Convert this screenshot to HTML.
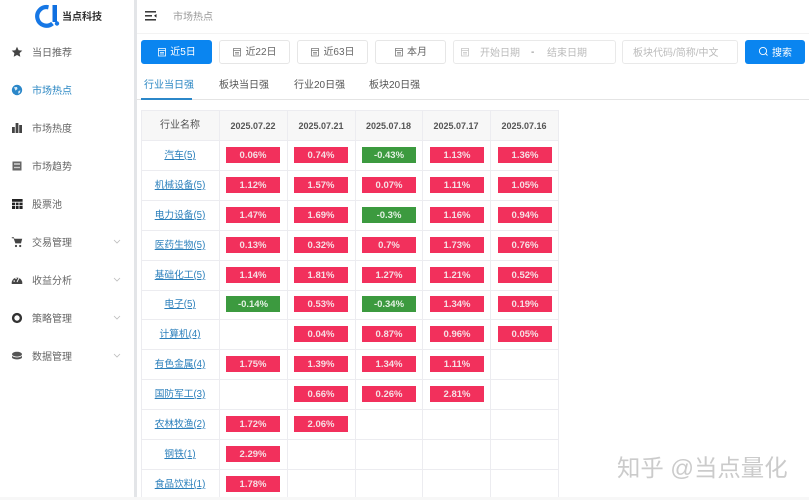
<!DOCTYPE html>
<html lang="zh"><head><meta charset="utf-8"><style>
*{box-sizing:border-box}
html,body{margin:0;padding:0;background:#fff}
body{width:809px;height:500px;overflow:hidden;position:relative;font-family:"Liberation Sans","Noto Sans CJK SC",sans-serif;font-size:10px;color:#555}
#w{position:absolute;left:0;top:0;width:809px;height:500px;filter:blur(.3px)}
.a{position:absolute}
.nav{position:absolute;left:32px;font-size:10px;line-height:14px;color:#666;white-space:nowrap}
.ic{position:absolute;left:11px;width:12px;height:12px}
.chev{position:absolute;left:113px;width:8px;height:5px}
.btn{position:absolute;top:40px;height:24px;width:71px;border:1px solid #e6e6e6;border-radius:3px;text-align:center;line-height:24px;color:#666;font-size:10px;background:#fff;white-space:nowrap}
.btn svg{vertical-align:-1.5px;margin-right:3px}
.tab{position:absolute;top:79px;font-size:10px;line-height:14px;color:#555;white-space:nowrap}
.h,.n{position:absolute;text-align:center;white-space:nowrap}
.h{top:110px;height:30px;line-height:32px;background:#f7f7f7;font-size:9px;color:#555;font-weight:700}
.h.z{font-size:10px;font-weight:400}
.n{left:141px;width:78px;font-size:9.7px;line-height:14px;color:#2b7fbb;text-decoration:underline}
.l{position:absolute;background:#ececf0}
.b{position:absolute;width:54px;height:16px;line-height:17px;text-align:center;color:#f6dfe4;background:#f2305c;font-size:9.5px;font-weight:700}
.g{background:#3c9a3f;color:#e4f2e4}
</style></head><body><div id="w">
<div class="a" style="left:134px;top:0;width:3px;height:500px;background:#e3e5e8"></div>
<div class="a" style="left:0;top:497px;width:809px;height:3px;background:#f7f7f7"></div>
<svg class="a" style="left:35px;top:3px" width="26" height="25" viewBox="0 0 26 25"><path d="M13.500 4.300A9.300 9.300 0 1 0 17.500 20.500" fill="none" stroke="#1677e5" stroke-width="4.200"/><rect x="17.500" y="2" width="4.500" height="17" fill="#0f6fe0"/><circle cx="22" cy="20.500" r="2.200" fill="#1677e5"/></svg>
<div class="a" style="left:62px;top:11px;font-size:10px;line-height:14px;color:#333;font-weight:700;white-space:nowrap">当点科技</div>

<svg class="ic" style="top:46px" viewBox="0 0 12 12"><path d="M6 .8 7.600 4.200l3.700.4-2.700 2.500.7 3.700L6 9l-3.300 1.800.7-3.700L.7 4.600l3.700-.4z" fill="#444"/></svg>
<div class="nav" style="top:47px">当日推荐</div>
<svg class="ic" style="top:84px" viewBox="0 0 12 12"><circle cx="6" cy="6" r="5.200" fill="#2b87c9"/><path d="M3 3.200 6 3l.5 2-2 1.600zM7.500 7l2-.6-.8 2.600-1.600.6z" fill="#dcecf7"/></svg>
<div class="nav" style="top:85px;color:#2b87c3">市场热点</div>
<svg class="ic" style="top:122px" viewBox="0 0 12 12"><rect x="1" y="5" width="2.800" height="6" fill="#444"/><rect x="4.600" y="1" width="2.800" height="10" fill="#444"/><rect x="8.200" y="3" width="2.800" height="8" fill="#444"/></svg>
<div class="nav" style="top:123px">市场热度</div>
<svg class="ic" style="top:160px" viewBox="0 0 12 12"><rect x="1.500" y="1.500" width="9" height="9" fill="#666"/><rect x="3" y="3.200" width="6" height="1.600" fill="#ccc"/><rect x="3" y="6.800" width="6" height="1.400" fill="#ccc"/></svg>
<div class="nav" style="top:161px">市场趋势</div>
<svg class="ic" style="top:198px" viewBox="0 0 12 12"><rect x="1" y="1" width="10.600" height="10" fill="#222"/><path d="M1 4.200h10.600M1 7.600h10.600M4.500 4v7M8 4v7" stroke="#fff" stroke-width=".8"/></svg>
<div class="nav" style="top:199px">股票池</div>
<svg class="ic" style="top:236px" viewBox="0 0 12 12"><path d="M.8 1.200h2l.6 1.600h7.800L10 7.400H4.400L2.600 2.200H.8z" fill="#444"/><circle cx="5" cy="10" r="1.100" fill="#444"/><circle cx="9.200" cy="10" r="1.100" fill="#444"/></svg>
<div class="nav" style="top:237px">交易管理</div>
<svg class="ic" style="top:274px" viewBox="0 0 12 12"><path d="M.8 10a5.300 5.300 0 1 1 10.400 0z" fill="#444"/><path d="M6 8 8 4" stroke="#fff" stroke-width="1"/><circle cx="3.200" cy="7" r=".8" fill="#fff"/><circle cx="5" cy="4.400" r=".8" fill="#fff"/></svg>
<div class="nav" style="top:275px">收益分析</div>
<svg class="ic" style="top:312px" viewBox="0 0 12 12"><circle cx="6" cy="6" r="3.900" fill="none" stroke="#333" stroke-width="2.400"/></svg>
<div class="nav" style="top:313px">策略管理</div>
<svg class="ic" style="top:350px" viewBox="0 0 12 12"><ellipse cx="6" cy="4.200" rx="5" ry="2.400" fill="#555"/><path d="M1 5.500C2 8 10 8 11 5.500V7.500C10 10 2 10 1 7.500z" fill="#555"/></svg>
<div class="nav" style="top:351px">数据管理</div>
<svg class="chev" style="top:239px" viewBox="0 0 8 5"><path d="M1 1l3 3 3-3" fill="none" stroke="#bbb" stroke-width=".8"/></svg>
<svg class="chev" style="top:277px" viewBox="0 0 8 5"><path d="M1 1l3 3 3-3" fill="none" stroke="#bbb" stroke-width=".8"/></svg>
<svg class="chev" style="top:315px" viewBox="0 0 8 5"><path d="M1 1l3 3 3-3" fill="none" stroke="#bbb" stroke-width=".8"/></svg>
<svg class="chev" style="top:353px" viewBox="0 0 8 5"><path d="M1 1l3 3 3-3" fill="none" stroke="#bbb" stroke-width=".8"/></svg>

<svg class="a" style="left:145px;top:11px" width="12" height="10" viewBox="0 0 12 10"><path d="M0 .8h11M0 4.800h7M0 8.800h11" stroke="#222" stroke-width="1.400"/><path d="M11.500 3 9 4.800l2.500 1.800z" fill="#222"/></svg>
<div class="a" style="left:173px;top:11px;font-size:10px;line-height:14px;color:#999;white-space:nowrap">市场热点</div>
<div class="a" style="left:137px;top:33px;width:672px;height:1px;background:#f3f3f3"></div>

<div class="btn" style="left:141px;background:#0a85f0;border-color:#0a85f0;color:#fff"><svg width="10" height="10" viewBox="0 0 10 10"><path d="M1.500 1.500h7v7.500h-7zM1.500 3.500h7M3 5.500h4M3 7h4" fill="none" stroke="#fff" stroke-width=".8"/></svg>近5日</div>
<div class="btn" style="left:219px"><svg width="10" height="10" viewBox="0 0 10 10"><path d="M1.500 1.500h7v7.500h-7zM1.500 3.500h7M3 5.500h4M3 7h4" fill="none" stroke="#777" stroke-width=".8"/></svg>近22日</div>
<div class="btn" style="left:297px"><svg width="10" height="10" viewBox="0 0 10 10"><path d="M1.500 1.500h7v7.500h-7zM1.500 3.500h7M3 5.500h4M3 7h4" fill="none" stroke="#777" stroke-width=".8"/></svg>近63日</div>
<div class="btn" style="left:375px"><svg width="10" height="10" viewBox="0 0 10 10"><path d="M1.500 1.500h7v7.500h-7zM1.500 3.500h7M3 5.500h4M3 7h4" fill="none" stroke="#777" stroke-width=".8"/></svg>本月</div>
<div class="a" style="left:453px;top:40px;width:163px;height:24px;border:1px solid #e9e9e9;border-radius:3px"></div>
<svg class="a" style="left:460px;top:47px" width="10" height="10" viewBox="0 0 10 10"><path d="M1.500 1.500h7v7.500h-7zM1.500 3.500h7M3 5.500h4M3 7h4" fill="none" stroke="#c4c4c4" stroke-width=".8"/></svg>
<div class="a" style="left:480px;top:47px;font-size:10px;line-height:14px;color:#bbb;white-space:nowrap">开始日期</div>
<div class="a" style="left:531px;top:46px;font-size:10px;line-height:14px;color:#777">-</div>
<div class="a" style="left:547px;top:47px;font-size:10px;line-height:14px;color:#bbb;white-space:nowrap">结束日期</div>
<div class="a" style="left:622px;top:40px;width:116px;height:24px;border:1px solid #e9e9e9;border-radius:3px"></div>
<div class="a" style="left:633px;top:47px;font-size:10px;line-height:14px;color:#bbb;white-space:nowrap">板块代码/简称/中文</div>
<div class="a" style="left:745px;top:40px;width:60px;height:24px;background:#0a85f0;border-radius:3px"></div>
<svg class="a" style="left:758px;top:46px" width="11" height="11" viewBox="0 0 11 11"><circle cx="5" cy="5" r="3.600" fill="none" stroke="#fff" stroke-width=".9"/><path d="M7.600 7.600 9.500 9.500" stroke="#fff" stroke-width=".9"/></svg>
<div class="a" style="left:772px;top:47px;font-size:10px;line-height:14px;color:#fff;white-space:nowrap">搜索</div>

<div class="tab" style="left:144px;color:#2b87c3">行业当日强</div>
<div class="tab" style="left:219px">板块当日强</div>
<div class="tab" style="left:294px">行业20日强</div>
<div class="tab" style="left:369px">板块20日强</div>
<div class="a" style="left:137px;top:99px;width:672px;height:1px;background:#e4e4e4"></div>
<div class="a" style="left:141px;top:98px;width:51px;height:2px;background:#2b87c9"></div>

<div class="h z" style="left:141px;width:78px">行业名称</div>
<div class="h" style="left:219px;width:68px">2025.07.22</div>
<div class="h" style="left:287px;width:68px">2025.07.21</div>
<div class="h" style="left:355px;width:67px">2025.07.18</div>
<div class="h" style="left:422px;width:68px">2025.07.17</div>
<div class="h" style="left:490px;width:68px">2025.07.16</div>

<i class="l" style="left:141px;top:110px;width:417px;height:1px"></i>
<i class="l" style="left:141px;top:140px;width:417px;height:1px"></i>
<i class="l" style="left:141px;top:170px;width:417px;height:1px"></i>
<i class="l" style="left:141px;top:200px;width:417px;height:1px"></i>
<i class="l" style="left:141px;top:230px;width:417px;height:1px"></i>
<i class="l" style="left:141px;top:260px;width:417px;height:1px"></i>
<i class="l" style="left:141px;top:290px;width:417px;height:1px"></i>
<i class="l" style="left:141px;top:319px;width:417px;height:1px"></i>
<i class="l" style="left:141px;top:349px;width:417px;height:1px"></i>
<i class="l" style="left:141px;top:379px;width:417px;height:1px"></i>
<i class="l" style="left:141px;top:409px;width:417px;height:1px"></i>
<i class="l" style="left:141px;top:439px;width:417px;height:1px"></i>
<i class="l" style="left:141px;top:469px;width:417px;height:1px"></i>
<i class="l" style="left:141px;top:110px;width:1px;height:387px"></i>
<i class="l" style="left:219px;top:110px;width:1px;height:387px"></i>
<i class="l" style="left:287px;top:110px;width:1px;height:387px"></i>
<i class="l" style="left:355px;top:110px;width:1px;height:387px"></i>
<i class="l" style="left:422px;top:110px;width:1px;height:387px"></i>
<i class="l" style="left:490px;top:110px;width:1px;height:387px"></i>
<i class="l" style="left:558px;top:110px;width:1px;height:387px"></i>

<div class="n" style="top:149px">汽车(5)</div>
<div class="n" style="top:179px">机械设备(5)</div>
<div class="n" style="top:209px">电力设备(5)</div>
<div class="n" style="top:239px">医药生物(5)</div>
<div class="n" style="top:269px">基础化工(5)</div>
<div class="n" style="top:298px">电子(5)</div>
<div class="n" style="top:328px">计算机(4)</div>
<div class="n" style="top:358px">有色金属(4)</div>
<div class="n" style="top:388px">国防军工(3)</div>
<div class="n" style="top:418px">农林牧渔(2)</div>
<div class="n" style="top:448px">钢铁(1)</div>
<div class="n" style="top:478px">食品饮料(1)</div>

<div class="b" style="left:226px;top:147px">0.06%</div><div class="b" style="left:294px;top:147px">0.74%</div><div class="b g" style="left:362px;top:147px">-0.43%</div><div class="b" style="left:430px;top:147px">1.13%</div><div class="b" style="left:498px;top:147px">1.36%</div>
<div class="b" style="left:226px;top:177px">1.12%</div><div class="b" style="left:294px;top:177px">1.57%</div><div class="b" style="left:362px;top:177px">0.07%</div><div class="b" style="left:430px;top:177px">1.11%</div><div class="b" style="left:498px;top:177px">1.05%</div>
<div class="b" style="left:226px;top:207px">1.47%</div><div class="b" style="left:294px;top:207px">1.69%</div><div class="b g" style="left:362px;top:207px">-0.3%</div><div class="b" style="left:430px;top:207px">1.16%</div><div class="b" style="left:498px;top:207px">0.94%</div>
<div class="b" style="left:226px;top:237px">0.13%</div><div class="b" style="left:294px;top:237px">0.32%</div><div class="b" style="left:362px;top:237px">0.7%</div><div class="b" style="left:430px;top:237px">1.73%</div><div class="b" style="left:498px;top:237px">0.76%</div>
<div class="b" style="left:226px;top:267px">1.14%</div><div class="b" style="left:294px;top:267px">1.81%</div><div class="b" style="left:362px;top:267px">1.27%</div><div class="b" style="left:430px;top:267px">1.21%</div><div class="b" style="left:498px;top:267px">0.52%</div>
<div class="b g" style="left:226px;top:296px">-0.14%</div><div class="b" style="left:294px;top:296px">0.53%</div><div class="b g" style="left:362px;top:296px">-0.34%</div><div class="b" style="left:430px;top:296px">1.34%</div><div class="b" style="left:498px;top:296px">0.19%</div>
<div class="b" style="left:294px;top:326px">0.04%</div><div class="b" style="left:362px;top:326px">0.87%</div><div class="b" style="left:430px;top:326px">0.96%</div><div class="b" style="left:498px;top:326px">0.05%</div>
<div class="b" style="left:226px;top:356px">1.75%</div><div class="b" style="left:294px;top:356px">1.39%</div><div class="b" style="left:362px;top:356px">1.34%</div><div class="b" style="left:430px;top:356px">1.11%</div>
<div class="b" style="left:294px;top:386px">0.66%</div><div class="b" style="left:362px;top:386px">0.26%</div><div class="b" style="left:430px;top:386px">2.81%</div>
<div class="b" style="left:226px;top:416px">1.72%</div><div class="b" style="left:294px;top:416px">2.06%</div>
<div class="b" style="left:226px;top:446px">2.29%</div>
<div class="b" style="left:226px;top:476px">1.78%</div>

<div class="a" style="left:617px;top:453px;font-size:23.4px;line-height:30px;color:#cbcbcb;white-space:nowrap">知乎 @当点量化</div>
</div></body></html>
